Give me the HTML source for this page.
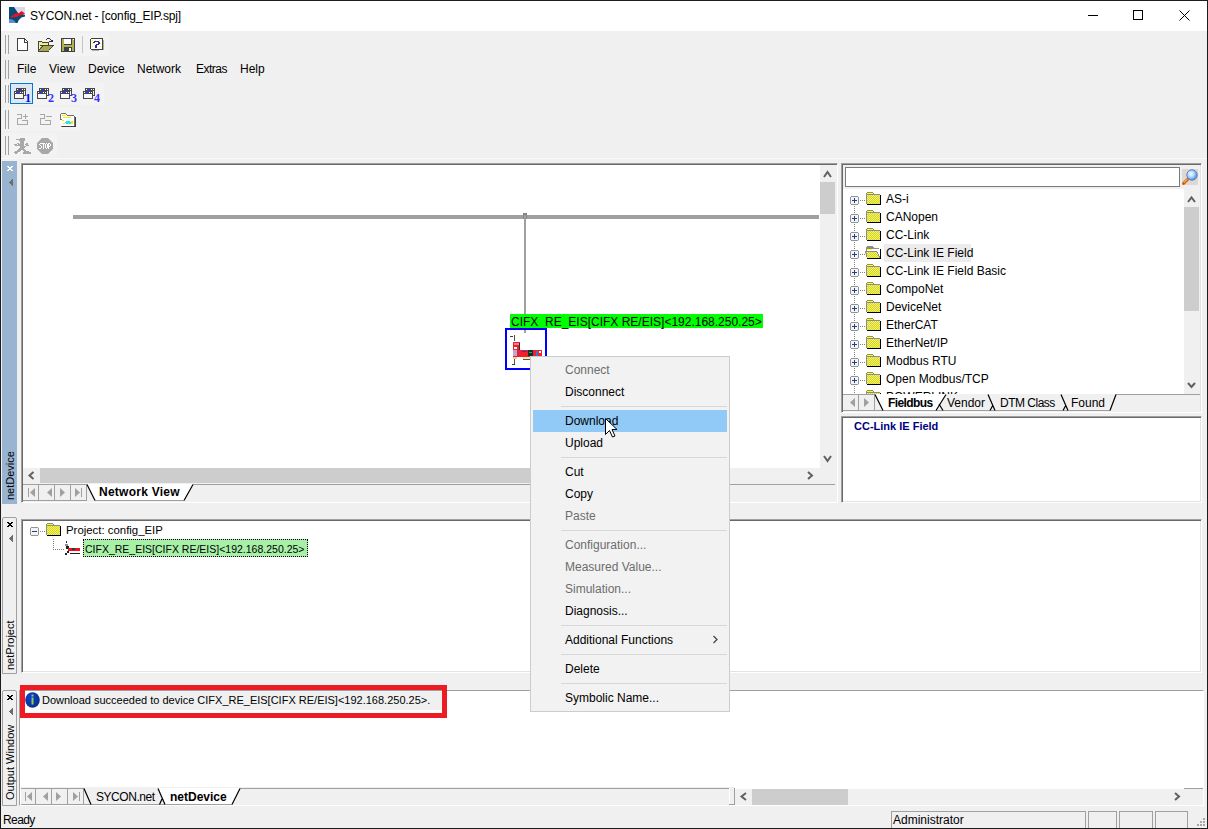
<!DOCTYPE html>
<html><head><meta charset="utf-8">
<style>
*{margin:0;padding:0;box-sizing:border-box}
html,body{width:1208px;height:829px;overflow:hidden;background:#f0f0f0;font-family:"Liberation Sans",sans-serif;font-size:12px;color:#000}
.a{position:absolute}
.t{position:absolute;white-space:nowrap;line-height:16px}
.b{font-weight:bold}
svg{position:absolute;overflow:visible}
.sunk{position:absolute;border:1px solid #a0a0a0;border-right-color:#fff;border-bottom-color:#fff;box-shadow:inset 1px 1px #696969,inset -1px -1px #e3e3e3;background:#fff}
.grip{position:absolute;width:4px;border-left:1px solid #a0a0a0;border-right:1px solid #a0a0a0}
.mi{position:absolute;left:565px;white-space:nowrap;line-height:16px}
.dis{color:#6d6d6d}
.sep{position:absolute;left:561px;width:166px;height:1px;background:#d7d7d7}
.tree{position:absolute;left:886px;white-space:nowrap;line-height:16px}
.pb{position:absolute;width:9px;height:9px;border:1px solid #a0a0a0;background:#f4f4f4;border-radius:1px}
.pb:before{content:"";position:absolute;left:1px;top:3px;width:5px;height:1px;background:#2b4a8c}
.pb:after{content:"";position:absolute;left:3px;top:1px;width:1px;height:5px;background:#2b4a8c}
.dh{position:absolute;height:1px;border-top:1px dotted #808080}
.nb{position:absolute;width:16px;height:16px;border-right:1px solid #d0d0d0;background:#f0f0f0}
.spanel{position:absolute;top:811px;height:17px;border:1px solid #a0a0a0;border-bottom:none}
</style></head><body>
<!-- window frame -->
<div class="a" style="left:0;top:0;width:1208px;height:829px;border:1px solid #1c1c1c"></div>
<div class="a" style="left:1px;top:1px;width:1206px;height:30px;background:#fff"></div>
<div class="t" style="left:30px;top:8px;letter-spacing:-0.15px">SYCON.net - [config_EIP.spj]</div>
<!-- caption buttons -->
<div class="a" style="left:1088px;top:15px;width:10px;height:1px;background:#000"></div>
<div class="a" style="left:1133px;top:10px;width:10px;height:10px;border:1px solid #000"></div>
<svg style="left:1179px;top:10px" width="11" height="11"><path d="M0.5 0.5L10.5 10.5M10.5 0.5L0.5 10.5" stroke="#000" stroke-width="1"/></svg>


<div class="a" style="left:3px;top:33px;width:106px;height:23px;background:#f3f3f3;border-radius:3px"></div>
<div class="a" style="left:3px;top:82px;width:101px;height:23px;background:#f3f3f3;border-radius:3px"></div>
<div class="a" style="left:3px;top:107px;width:77px;height:24px;background:#f3f3f3;border-radius:3px"></div>
<div class="a" style="left:3px;top:133px;width:54px;height:24px;background:#f3f3f3;border-radius:3px"></div>
<!-- toolbar icons -->
<svg style="left:9px;top:7px" width="16" height="16">
 <rect x="5" y="0" width="11" height="9" fill="#d8dce8"/>
 <path d="M0 0H5L9 6L16 8V9.5L12.5 10.5Q10 12 8.5 16H0Z" fill="#0a4a78"/>
 <path d="M0 12Q5 12 7 16H0Z" fill="#5a92c8"/>
 <path d="M1.5 10L4 8L7 6.5L10 6L12.5 4L16 6.5L13 8L10 8.5L8 10L2 10.5Z" fill="#ee1020"/>
</svg>
<svg style="left:17px;top:38px" width="11" height="13" shape-rendering="crispEdges">
 <path d="M1 1h6l3 3v8h-9z" fill="#fff"/>
 <path d="M0 0h8v1h-8zM0 0h1v13h-1zM0 12h11v1h-11zM10 3h1v10h-1zM7 0h1v4h3v1h-4zM8 1h1v1h-1zM9 2h1v1h-1z" fill="#404040"/>
</svg>
<svg style="left:38px;top:37px" width="16" height="15" shape-rendering="crispEdges">
 <path d="M1 4h3l1 1h5v3h-9z" fill="#f0f080"/>
 <path d="M0 4h4v1h-4zM0 4h1v11h-1zM4 5h6v1h-6zM10 5h1v3h-1z" fill="#404040"/>
 <path d="M3 9h12l-4 5h-10z" fill="#a8a850"/>
 <path d="M2 8h14v1h-14zM1 13l4-5h1l-4 5zM10 13l5-5h1l-5 5zM0 14h11v1h-11z" fill="#404040"/>
 <path d="M9 1h3v1h-3zM8 2h1v1h-1zM12 2h1v1h-1zM13 3h1v1h-1zM11 4h4v1h-4zM14 3h1v1h-1z" fill="#303030"/>
</svg>
<svg style="left:61px;top:38px" width="14" height="14" shape-rendering="crispEdges">
 <rect x="0" y="0" width="14" height="14" fill="#404040"/>
 <rect x="1" y="1" width="12" height="12" fill="#b0b050"/>
 <rect x="3" y="1" width="8" height="6" fill="#404040"/>
 <rect x="3" y="1" width="7" height="5" fill="#fff"/>
 <rect x="3" y="9" width="8" height="4" fill="#404040"/>
 <rect x="8" y="10" width="2" height="3" fill="#fff"/>
 <rect x="12" y="1" width="1" height="1" fill="#fff"/>
</svg>
<div class="a" style="left:82px;top:36px;width:1px;height:17px;background:#c4c4c4"></div>
<svg style="left:90px;top:38px" width="15" height="15" shape-rendering="crispEdges">
 <path d="M1 0h11l1 1v10l-1 1h-3l3 3l-3-3h-8l-1-1v-10z" fill="#404040"/>
 <path d="M1 1h11v10h-11z" fill="#fffff0"/>
 <path d="M2 2h1v1h-1zM5 2h1v1h-1zM9 2h1v1h-1zM2 5h1v1h-1zM10 5h1v1h-1zM2 8h1v1h-1zM5 9h1v1h-1zM10 8h1v1h-1z" fill="#f0f000"/>
 <path d="M4 3h5v1h1v2h-1v1h-2v2h-2v-2h1v-1h2v-2h-3v1h-2v-1h1z" fill="#2a2ab0"/>
 <rect x="5" y="9" width="2" height="1" fill="#2a2ab0"/>
 <path d="M13 2h1v10h-1zM2 12h7v1h-7z" fill="#b0b0b0"/>
</svg>

<!-- row3 window icons -->
<div class="a" style="left:10px;top:83px;width:23px;height:21px;border:1px solid #0078d7;background:#dde8f3"></div>
<svg style="left:14px;top:88px" width="80" height="16" shape-rendering="crispEdges">
 <g id="wi">
  <rect x="2" y="0" width="10" height="8" fill="#000"/>
  <rect x="3" y="3" width="8" height="4" fill="#f0f0f0"/>
  <path d="M3 1h1v1h-1zM8 1h1v1h-1zM10 1h1v1h-1z" fill="#fff"/>
  <rect x="5" y="1" width="2" height="2" fill="#0000ff"/>
  <rect x="0" y="3" width="10" height="8" fill="#000"/>
  <rect x="1" y="6" width="8" height="4" fill="#e8f0f8"/>
  <path d="M1 4h1v1h-1zM6 4h1v1h-1zM8 4h1v1h-1z" fill="#fff"/>
  <rect x="3" y="4" width="2" height="2" fill="#0000ff"/>
 </g>
 <g id="wi2">
  <rect x="2" y="0" width="10" height="8" fill="#484848"/>
  <rect x="3" y="3" width="8" height="4" fill="#f4f4f4"/>
  <path d="M3 1h1v1h-1zM8 1h1v1h-1zM10 1h1v1h-1z" fill="#fff"/>
  <rect x="5" y="1" width="2" height="2" fill="#3333ff"/>
  <rect x="0" y="3" width="10" height="8" fill="#484848"/>
  <rect x="1" y="6" width="8" height="4" fill="#fafafa"/>
  <path d="M1 4h1v1h-1zM6 4h1v1h-1zM8 4h1v1h-1z" fill="#fff"/>
  <rect x="3" y="4" width="2" height="2" fill="#3333ff"/>
 </g>
 <use href="#wi2" x="23"/>
 <use href="#wi2" x="46"/>
 <use href="#wi2" x="69"/>
</svg>


<div class="a" style="left:25px;top:92px;font:bold 12px/12px 'Liberation Serif',serif;color:#0000ff">1</div>
<div class="a" style="left:48px;top:92px;font:bold 12px/12px 'Liberation Serif',serif;color:#3333ff">2</div>
<div class="a" style="left:71px;top:92px;font:bold 12px/12px 'Liberation Serif',serif;color:#3333ff">3</div>
<div class="a" style="left:94px;top:92px;font:bold 12px/12px 'Liberation Serif',serif;color:#3333ff">4</div>
<!-- row4 icons -->
<svg style="left:17px;top:114px" width="60" height="13" shape-rendering="crispEdges">
 <path d="M0 0h5v1h-5zM4 0h1v5h-1zM0 4h5v1h-5zM0 4h1v7h-1zM0 10h11v1h-11zM10 6h1v5h-1zM5 6h6v1h-6zM8 0h1v5h-1zM6 2h5v1h-5z" fill="#a8a8a8"/>
 <path d="M23 0h5v1h-5zM27 0h1v5h-1zM23 4h5v1h-5zM23 4h1v7h-1zM23 10h11v1h-11zM33 6h1v5h-1zM28 6h6v1h-6zM29 2h6v1h-6z" fill="#a8a8a8"/>
 <g transform="translate(43,-1)">
  <path d="M1 1h5l1 1h6l1 1v10h-13l-1-6h1z" fill="#fff"/>
  <path d="M1 0h5v1h-5zM0 1h1v6h-1zM6 1h1v1h-1zM7 2h7v1h-7zM14 3h1v10h-1zM1 13h14v1h-14zM0 6h2v1h-2z" fill="#707070"/>
  <path d="M2 2h4v1h-4zM3 4h8v1h-8zM2 7h2v1h-2zM5 9h1v1h-1zM11 8h2v3h-2zM3 10h2v1h-2z" fill="#f0f000"/>
  <path d="M6 8h4v1h1v2h-5v-1h-1v-1h1z" fill="#30e0f0"/>
  <path d="M2 13h14v1h-14zM15 4h1v10h-1z" fill="#404040"/>
 </g>
</svg>

<!-- row5 icons -->
<svg style="left:14px;top:138px" width="40" height="16" shape-rendering="crispEdges">
 <path d="M6 0h5v1h-5zM2 1h9v1h-9zM5 2h6v1h-6zM6 3h4v1h-4zM6 4h4v1h-4zM3 5h2v1h-2zM6 5h4v1h-4zM12 5h2v1h-2zM0 6h3v1h-3zM4 6h6v1h-6zM11 6h3v1h-3zM1 7h9v1h-9zM12 7h3v1h-3zM6 8h6v1h-6zM6 9h5v1h-5zM5 10h5v1h-5zM4 11h4v1h-4zM8 11h3v1h-3zM3 12h4v1h-4zM9 12h3v1h-3zM1 13h5v1h-5zM10 13h5v1h-5zM0 14h4v1h-4zM9 14h8v1h-8zM1 15h2v1h-2zM9 15h8v1h-8z" fill="#a8a8a8"/>
 <path d="M28 0h6l5 5v6l-5 5h-6l-5-5v-6z" fill="#a8a8a8" shape-rendering="auto"/>
 <path d="M26 5h1v1h-1zM27 5h1v1h-1zM25 6h1v1h-1zM26 7h1v1h-1zM27 8h1v1h-1zM27 9h1v1h-1zM25 10h1v1h-1zM26 10h1v1h-1zM28 5h1v1h-1zM29 5h1v1h-1zM30 5h1v1h-1zM29 6h1v1h-1zM29 7h1v1h-1zM29 8h1v1h-1zM29 9h1v1h-1zM29 10h1v1h-1zM32 5h1v1h-1zM31 6h1v1h-1zM33 6h1v1h-1zM31 7h1v1h-1zM33 7h1v1h-1zM31 8h1v1h-1zM33 8h1v1h-1zM31 9h1v1h-1zM33 9h1v1h-1zM32 10h1v1h-1zM34 5h1v1h-1zM35 5h1v1h-1zM34 6h1v1h-1zM36 6h1v1h-1zM34 7h1v1h-1zM36 7h1v1h-1zM34 8h1v1h-1zM35 8h1v1h-1zM34 9h1v1h-1zM34 10h1v1h-1z" fill="#fff"/>
</svg>

<!-- toolbar rows -->
<div class="grip" style="left:5px;top:35px;height:19px"></div>
<div class="grip" style="left:5px;top:60px;height:19px"></div>
<div class="grip" style="left:5px;top:85px;height:18px"></div>
<div class="grip" style="left:5px;top:110px;height:19px"></div>
<div class="grip" style="left:5px;top:136px;height:19px"></div>

<!-- menu -->
<div class="t" style="left:17px;top:61px">File</div>
<div class="t" style="left:49px;top:61px">View</div>
<div class="t" style="left:88px;top:61px">Device</div>
<div class="t" style="left:137px;top:61px">Network</div>
<div class="t" style="left:196px;top:61px;letter-spacing:-0.5px">Extras</div>
<div class="t" style="left:240px;top:61px">Help</div>

<!-- toolbar separator line bottom -->
<div class="a" style="left:1px;top:158px;width:1206px;height:1px;background:#fafafa"></div>

<!-- ===== netDevice panel ===== -->
<div class="a" style="left:2px;top:161px;width:15px;height:343px;background:#99b4d1"></div>
<svg style="left:7px;top:166px" width="6" height="5" shape-rendering="crispEdges"><path d="M0 0h2v1h-2zM4 0h2v1h-2zM1 1h4v1h-4zM2 2h2v1h-2zM1 3h4v1h-4zM0 4h2v1h-2zM4 4h2v1h-2z" fill="#fff"/></svg>
<svg style="left:9px;top:179px" width="4" height="7" shape-rendering="crispEdges"><path d="M3 0h1v7h-1zM2 1h1v5h-1zM1 2h1v3h-1zM0 3h1v1h-1z" fill="#6d6d6d"/></svg>
<div class="t" style="left:4px;top:500px;font-size:11px;line-height:13px;transform:rotate(-90deg);transform-origin:0 0;color:#000">netDevice</div>
<div class="sunk" style="left:21px;top:163px;width:817px;height:340px"></div>
<!-- v scrollbar -->
<div class="a" style="left:820px;top:165px;width:17px;height:303px;background:#f0f0f0"></div>
<div class="a" style="left:820px;top:182px;width:15px;height:32px;background:#cdcdcd"></div>
<!-- h scrollbar -->
<div class="a" style="left:23px;top:468px;width:814px;height:15px;background:#f0f0f0"></div>
<div class="a" style="left:40px;top:468px;width:500px;height:15px;background:#cdcdcd"></div>
<!-- tab row -->
<svg style="left:23px;top:483px" width="814" height="19">
 <rect x="0" y="0" width="814" height="19" fill="#f0f0f0"/>
 <path d="M0 1.5H64M170 1.5H812M0 17.5H64M72 17.5H161M15.5 1V18M31.5 1V18M47.5 1V18M63.5 1V18" stroke="#a0a0a0" stroke-width="1" fill="none"/>
 <path d="M64 1L170 1L161 17L72 17Z" fill="#fff"/>
 <path d="M64 1.5L72 17.5M170 1.5L161 17.5" stroke="#000" stroke-width="1.2" fill="none"/>
 <path d="M5 5h1v9h-1zM12 5v9l-5-4.5z" fill="#a0a0a0"/>
 <path d="M29 5v9l-5-4.5z" fill="#a0a0a0"/>
 <path d="M37 5v9l5-4.5z" fill="#a0a0a0"/>
 <path d="M52 5v9l5-4.5zM58 5h1v9h-1z" fill="#a0a0a0"/>
</svg>
<div class="t b" style="left:99px;top:484px;font-size:12px;letter-spacing:0.25px">Network View</div>

<!-- bus -->
<div class="a" style="left:73px;top:215px;width:746px;height:4px;background:#a0a0a0"></div>
<div class="a" style="left:523px;top:213px;width:4px;height:6px;background:#858585"></div>
<div class="a" style="left:524px;top:215px;width:2px;height:100px;background:#a0a0a0"></div>
<div class="a" style="left:510px;top:314px;width:253px;height:14px;background:#00ff00"></div>
<div class="t" style="left:511px;top:314px">CIFX_RE_EIS[CIFX RE/EIS]&lt;192.168.250.25&gt;</div>
<div class="a" style="left:505px;top:328px;width:42px;height:42px;border:2px solid #0000ff"></div>
<svg style="left:506px;top:330px" width="40" height="38" shape-rendering="crispEdges">
 <rect x="18" y="0" width="2" height="3" fill="#a0a0a0"/>
 <rect x="8" y="5" width="1" height="6" fill="#505050"/>
 <rect x="4" y="6" width="3" height="1" fill="#404040"/>
 <rect x="7" y="12" width="7" height="15" fill="#ee2030"/>
 <rect x="8" y="13" width="5" height="2" fill="#f08090"/>
 <rect x="8" y="17" width="3" height="2" fill="#fff"/>
 <rect x="7" y="20" width="4" height="6" fill="#d0a0d0"/>
 <rect x="9" y="21" width="2" height="4" fill="#80c0f0"/>
 <rect x="13" y="13" width="1" height="14" fill="#303030"/>
 <rect x="13" y="20" width="23" height="7" fill="#f02030"/>
 <rect x="16" y="21" width="5" height="1" fill="#3040a0"/>
 <rect x="22" y="20" width="5" height="6" fill="#103028"/>
 <rect x="23" y="22" width="3" height="1" fill="#20a080"/>
 <rect x="30" y="21" width="2" height="5" fill="#3080c0"/>
 <rect x="33" y="21" width="2" height="2" fill="#fff"/>
 <rect x="7" y="27" width="4" height="2" fill="#f0d090"/>
 <rect x="17" y="27" width="7" height="2" fill="#f0f0a0"/>
 <rect x="17" y="29" width="7" height="1" fill="#505050"/>
 <rect x="8" y="29" width="1" height="6" fill="#505050"/>
 <rect x="6" y="34" width="3" height="1" fill="#404040"/>
</svg>

<!-- ===== right catalog panel ===== -->
<div class="sunk" style="left:841px;top:163px;width:361px;height:250px;background:#f0f0f0"></div>
<div class="a" style="left:845px;top:167px;width:335px;height:20px;border:1px solid #7a7a7a;background:#fff"></div>
<div class="a" style="left:1182px;top:169px;width:16px;height:16px;background:#dcd9d3"></div>
<svg style="left:1182px;top:169px" width="16" height="16">
 <defs><radialGradient id="lens" cx="0.4" cy="0.4" r="0.6"><stop offset="0" stop-color="#ffffff"/><stop offset="0.5" stop-color="#a8dcff"/><stop offset="1" stop-color="#4a90e0"/></radialGradient></defs>
 <path d="M1.5 14.5L6 10" stroke="#d06010" stroke-width="3" stroke-linecap="round"/>
 <path d="M2 13.5L5.5 10" stroke="#f8a040" stroke-width="1.2"/>
 <circle cx="10" cy="6" r="5.2" fill="url(#lens)" stroke="#6a7ad0" stroke-width="1"/>
</svg>
<div class="a" style="left:843px;top:189px;width:357px;height:205px;background:#fff"></div>
<div class="a" style="left:1184px;top:189px;width:16px;height:205px;background:#f0f0f0"></div>
<div class="a" style="left:1184px;top:207px;width:15px;height:104px;background:#cdcdcd"></div>



<svg style="left:0;top:0" width="1208" height="829" shape-rendering="crispEdges">
 <defs>
  <pattern id="dith" width="2" height="2" patternUnits="userSpaceOnUse">
   <rect width="2" height="2" fill="#c8c890"/>
   <rect width="1" height="1" fill="#ffff00"/>
   <rect x="1" y="1" width="1" height="1" fill="#ffff00"/>
  </pattern>
  <g id="pbx">
   <rect x="0" y="0" width="9" height="9" rx="1" fill="#f4f4f4" stroke="none"/>
   <path d="M1 0h7v1h-7zM1 8h7v1h-7zM0 1h1v7h-1zM8 1h1v7h-1z" fill="#939393"/>
   <path d="M2 4h5v1h-5zM4 2h1v5h-1z" fill="#1f3f8f"/>
   <path d="M10 4h1v1h-1zM12 4h1v1h-1zM14 4h1v1h-1z" fill="#808080"/>
  </g>
  <g id="fld">
   <path d="M1 0h6v1h1v1h6v1h-14v-2h1z" fill="#8c8c8c"/>
   <path d="M1 1h6v1h-6z" fill="#ffff00"/>
   <rect x="0" y="2" width="1" height="10" fill="#8c8c8c"/>
   <rect x="1" y="3" width="13" height="9" fill="url(#dith)"/>
   <rect x="1" y="12" width="14" height="1" fill="#000"/>
   <rect x="14" y="3" width="1" height="10" fill="#000"/>
  </g>
  <g id="fldo">
   <path d="M2 0h6v1h1v1h5v1h-13v-2h1z" fill="#8c8c8c"/>
   <rect x="1" y="2" width="1" height="4" fill="#8c8c8c"/>
   <path d="M2 3h5v1h-5z" fill="#ffff00"/>
   <path d="M0 6h12l3 6h-13z" fill="url(#dith)"/>
   <path d="M0 5h12v1h-12zM0 6h1v1h-1zM1 7h1v4h-1zM12 6h1v2h-1zM13 8h1v2h-1zM14 10h1v2h-1z" fill="#8c8c8c"/>
   <rect x="2" y="12" width="14" height="1" fill="#000"/>
   <rect x="15" y="3" width="1" height="10" fill="#000"/>
  </g>
 </defs>
 <rect x="854" y="206" width="1" height="1" fill="#808080"/><rect x="854" y="208" width="1" height="1" fill="#808080"/><rect x="854" y="210" width="1" height="1" fill="#808080"/><rect x="854" y="212" width="1" height="1" fill="#808080"/><rect x="854" y="224" width="1" height="1" fill="#808080"/><rect x="854" y="226" width="1" height="1" fill="#808080"/><rect x="854" y="228" width="1" height="1" fill="#808080"/><rect x="854" y="230" width="1" height="1" fill="#808080"/><rect x="854" y="242" width="1" height="1" fill="#808080"/><rect x="854" y="244" width="1" height="1" fill="#808080"/><rect x="854" y="246" width="1" height="1" fill="#808080"/><rect x="854" y="248" width="1" height="1" fill="#808080"/><rect x="854" y="260" width="1" height="1" fill="#808080"/><rect x="854" y="262" width="1" height="1" fill="#808080"/><rect x="854" y="264" width="1" height="1" fill="#808080"/><rect x="854" y="266" width="1" height="1" fill="#808080"/><rect x="854" y="278" width="1" height="1" fill="#808080"/><rect x="854" y="280" width="1" height="1" fill="#808080"/><rect x="854" y="282" width="1" height="1" fill="#808080"/><rect x="854" y="284" width="1" height="1" fill="#808080"/><rect x="854" y="296" width="1" height="1" fill="#808080"/><rect x="854" y="298" width="1" height="1" fill="#808080"/><rect x="854" y="300" width="1" height="1" fill="#808080"/><rect x="854" y="302" width="1" height="1" fill="#808080"/><rect x="854" y="314" width="1" height="1" fill="#808080"/><rect x="854" y="316" width="1" height="1" fill="#808080"/><rect x="854" y="318" width="1" height="1" fill="#808080"/><rect x="854" y="320" width="1" height="1" fill="#808080"/><rect x="854" y="332" width="1" height="1" fill="#808080"/><rect x="854" y="334" width="1" height="1" fill="#808080"/><rect x="854" y="336" width="1" height="1" fill="#808080"/><rect x="854" y="338" width="1" height="1" fill="#808080"/><rect x="854" y="350" width="1" height="1" fill="#808080"/><rect x="854" y="352" width="1" height="1" fill="#808080"/><rect x="854" y="354" width="1" height="1" fill="#808080"/><rect x="854" y="356" width="1" height="1" fill="#808080"/><rect x="854" y="368" width="1" height="1" fill="#808080"/><rect x="854" y="370" width="1" height="1" fill="#808080"/><rect x="854" y="372" width="1" height="1" fill="#808080"/><rect x="854" y="374" width="1" height="1" fill="#808080"/><rect x="854" y="386" width="1" height="1" fill="#808080"/><rect x="854" y="388" width="1" height="1" fill="#808080"/><rect x="854" y="390" width="1" height="1" fill="#808080"/><rect x="854" y="392" width="1" height="1" fill="#808080"/>
 <use href="#pbx" x="850" y="196"/>
 <use href="#fld" x="866" y="192"/>
 <use href="#pbx" x="850" y="214"/>
 <use href="#fld" x="866" y="210"/>
 <use href="#pbx" x="850" y="232"/>
 <use href="#fld" x="866" y="228"/>
 <use href="#pbx" x="850" y="250"/>
 <use href="#fldo" x="865" y="246"/>
 <use href="#pbx" x="850" y="268"/>
 <use href="#fld" x="866" y="264"/>
 <use href="#pbx" x="850" y="286"/>
 <use href="#fld" x="866" y="282"/>
 <use href="#pbx" x="850" y="304"/>
 <use href="#fld" x="866" y="300"/>
 <use href="#pbx" x="850" y="322"/>
 <use href="#fld" x="866" y="318"/>
 <use href="#pbx" x="850" y="340"/>
 <use href="#fld" x="866" y="336"/>
 <use href="#pbx" x="850" y="358"/>
 <use href="#fld" x="866" y="354"/>
 <use href="#pbx" x="850" y="376"/>
 <use href="#fld" x="866" y="372"/>
 <use href="#pbx" x="850" y="394"/>
 <use href="#fld" x="866" y="390"/>
</svg>
<div class="tree" style="top:191px">AS-i</div>
<div class="tree" style="top:209px">CANopen</div>
<div class="tree" style="top:227px">CC-Link</div>
<div class="a" style="left:884px;top:244px;width:87px;height:18px;background:#ececec"></div>
<div class="tree" style="top:245px">CC-Link IE Field</div>
<div class="tree" style="top:263px">CC-Link IE Field Basic</div>
<div class="tree" style="top:281px">CompoNet</div>
<div class="tree" style="top:299px">DeviceNet</div>
<div class="tree" style="top:317px">EtherCAT</div>
<div class="tree" style="top:335px">EtherNet/IP</div>
<div class="tree" style="top:353px">Modbus RTU</div>
<div class="tree" style="top:371px">Open Modbus/TCP</div>
<div class="tree" style="top:389px">POWERLINK</div>
<svg style="left:843px;top:393px" width="357" height="19">
 <rect x="0" y="1" width="357" height="18" fill="#f0f0f0"/>
 <path d="M0 1.5H32M273 1.5H357M0 17.5H267M15.5 1V18M31.5 1V18" stroke="#a0a0a0" stroke-width="1" fill="none"/>
 <path d="M32 1L103 1L93 17L40 17Z" fill="#fff"/>
 <path d="M32 1.5L40 17.5M103 1.5L93 17.5M96 11L100 17.5M145 1.5L152 17.5M147 17.5L150 12M218 1.5L225 17.5M220 17.5L223 12M273 1.5L267 17.5" stroke="#000" stroke-width="1.2" fill="none"/>
 <path d="M12 5v9l-5-4.5z" fill="#a0a0a0"/>
 <path d="M21 5v9l5-4.5z" fill="#a0a0a0"/>
</svg>

<div class="t b" style="left:888px;top:395px;letter-spacing:-0.6px">Fieldbus</div>
<div class="t" style="left:947px;top:395px">Vendor</div>
<div class="t" style="left:1000px;top:395px;letter-spacing:-0.5px">DTM Class</div>
<div class="t" style="left:1071px;top:395px">Found</div>

<div class="sunk" style="left:841px;top:416px;width:361px;height:87px"></div>
<div class="t b" style="left:854px;top:418px;font-size:11px;color:#000080">CC-Link IE Field</div>

<!-- ===== netProject ===== -->
<div class="a" style="left:2px;top:517px;width:15px;height:157px;border:1px solid #a0a0a0;border-radius:2px 2px 0 0;background:#f0f0f0"></div>
<svg style="left:7px;top:522px" width="6" height="5" shape-rendering="crispEdges"><path d="M0 0h2v1h-2zM4 0h2v1h-2zM1 1h4v1h-4zM2 2h2v1h-2zM1 3h4v1h-4zM0 4h2v1h-2zM4 4h2v1h-2z" fill="#000"/></svg>
<svg style="left:9px;top:535px" width="4" height="7" shape-rendering="crispEdges"><path d="M3 0h1v7h-1zM2 1h1v5h-1zM1 2h1v3h-1zM0 3h1v1h-1z" fill="#6d6d6d"/></svg>
<div class="t" style="left:4px;top:670px;font-size:11px;line-height:13px;transform:rotate(-90deg);transform-origin:0 0">netProject</div>
<div class="sunk" style="left:21px;top:519px;width:1181px;height:154px"></div>
<svg style="left:0;top:0" width="1" height="1" shape-rendering="crispEdges">
 <rect x="30" y="527" width="9" height="9" fill="#f4f4f4"/>
 <path d="M31 527h7v1h-7zM31 535h7v1h-7zM30 528h1v7h-1zM38 528h1v7h-1z" fill="#939393"/>
 <rect x="32" y="531" width="5" height="1" fill="#1f3f8f"/>
 <path d="M40 531h1v1h-1zM42 531h1v1h-1zM44 531h1v1h-1z" fill="#808080"/>
 <use href="#fld" x="46" y="523"/>
 <path d="M53 539h1v1h-1zM53 541h1v1h-1zM53 543h1v1h-1zM53 545h1v1h-1zM53 547h1v1h-1zM53 549h1v1h-1zM55 549h1v1h-1zM57 549h1v1h-1zM59 549h1v1h-1zM61 549h1v1h-1zM63 549h1v1h-1z" fill="#808080"/>
 <rect x="66" y="541" width="1" height="2" fill="#303030"/>
 <rect x="65" y="544" width="3" height="2" fill="#909090"/>
 <rect x="66" y="546" width="3" height="3" fill="#202020"/>
 <rect x="68" y="548" width="12" height="3" fill="#ee1020"/>
 <rect x="72" y="548" width="3" height="2" fill="#204040"/>
 <rect x="67" y="551" width="2" height="2" fill="#202020"/>
 <rect x="65" y="553" width="2" height="2" fill="#202020"/>
 <rect x="70" y="553" width="10" height="1" fill="#202020"/>
</svg>
<div class="t" style="left:66px;top:522px;font-size:11.4px">Project: config_EIP</div>
<div class="a" style="left:83px;top:539px;width:225px;height:18px;background:#a8f0a8;border:1px dotted #000"></div>
<div class="t" style="left:85px;top:541px;font-size:10.5px">CIFX_RE_EIS[CIFX RE/EIS]&lt;192.168.250.25&gt;</div>

<!-- ===== Output ===== -->
<div class="a" style="left:2px;top:690px;width:15px;height:116px;border:1px solid #a0a0a0;border-radius:2px 2px 0 0;background:#f0f0f0"></div>
<svg style="left:7px;top:695px" width="6" height="5" shape-rendering="crispEdges"><path d="M0 0h2v1h-2zM4 0h2v1h-2zM1 1h4v1h-4zM2 2h2v1h-2zM1 3h4v1h-4zM0 4h2v1h-2zM4 4h2v1h-2z" fill="#000"/></svg>
<svg style="left:9px;top:708px" width="4" height="7" shape-rendering="crispEdges"><path d="M3 0h1v7h-1zM2 1h1v5h-1zM1 2h1v3h-1zM0 3h1v1h-1z" fill="#6d6d6d"/></svg>
<div class="t" style="left:4px;top:800px;font-size:11px;line-height:13px;transform:rotate(-90deg);transform-origin:0 0">Output Window</div>
<div class="a" style="left:19px;top:690px;width:1185px;height:116px;background:#fff;border:1px solid #a0a0a0;border-right-color:#fff;border-bottom-color:#fff"></div>
<div class="a" style="left:40px;top:691px;width:402px;height:19px;background:#f0f0f0"></div>
<svg style="left:25px;top:692px" width="15" height="16">
 <defs><radialGradient id="ig" cx="0.35" cy="0.3" r="0.8"><stop offset="0" stop-color="#0a40d0"/><stop offset="1" stop-color="#08308a"/></radialGradient></defs>
 <ellipse cx="7.5" cy="8" rx="7.3" ry="7.8" fill="url(#ig)"/>
 <rect x="6.5" y="2.5" width="2" height="2" fill="#90d050"/>
 <rect x="6.5" y="5.5" width="2" height="7" fill="#90d050"/>
</svg>
<div class="t" style="left:42px;top:692px;font-size:11px">Download succeeded to device CIFX_RE_EIS[CIFX RE/EIS]&lt;192.168.250.25&gt;.</div>
<div class="a" style="left:20px;top:685px;width:427px;height:33px;border:5px solid #ed1c24"></div>
<!-- output tab row -->
<svg style="left:21px;top:787px" width="714" height="19">
 <rect x="0" y="0" width="714" height="18" fill="#f0f0f0"/>
 <path d="M713.5 1V17.5M708 17.5H714" stroke="#a0a0a0" stroke-width="1" fill="none"/>
 <path d="M708.5 1V17" stroke="#fff" stroke-width="1"/>
 <path d="M0 1.5H63M219 1.5H708M0 17.5H211M14.5 1V18M30.5 1V18M46.5 1V18M62.5 1V18" stroke="#a0a0a0" stroke-width="1" fill="none"/>
 <path d="M137 1L219 1L211 17L144 17Z" fill="#fff"/>
 <path d="M63 1.5L70 17.5M137 1.5L144 17.5M138.5 17.5L141 12M219 1.5L211 17.5" stroke="#000" stroke-width="1.2" fill="none"/>
 <path d="M4 5h1v9h-1zM11 5v9l-5-4.5z" fill="#a0a0a0"/>
 <path d="M27 5v9l-5-4.5z" fill="#a0a0a0"/>
 <path d="M35 5v9l5-4.5z" fill="#a0a0a0"/>
 <path d="M52 5v9l5-4.5zM58 5h1v9h-1z" fill="#a0a0a0"/>
</svg>
<div class="t" style="left:96px;top:789px;letter-spacing:-0.45px">SYCON.net</div>
<div class="t b" style="left:170px;top:789px">netDevice</div>
<div class="a" style="left:735px;top:789px;width:468px;height:16px;background:#f0f0f0"></div>
<div class="a" style="left:752px;top:789px;width:96px;height:16px;background:#cdcdcd"></div>
<div class="a" style="left:1184px;top:788px;width:19px;height:1px;background:#a0a0a0"></div>


<!-- chevrons -->
<svg style="left:0;top:0" width="1208" height="829" fill="none" stroke="#606060" stroke-width="2">
 <path d="M824 177L827.5 172L831 177"/>
 <path d="M824 456L827.5 461L831 456"/>
 <path d="M33.5 472L29.5 475.5L33.5 479"/>
 <path d="M808 472L812 475.5L808 479"/>
 <path d="M1188 202L1191.5 197.5L1195 202"/>
 <path d="M1188 383L1191.5 387L1195 383"/>
 <path d="M746 793L741.5 796.5L746 800"/>
 <path d="M1175 793L1179 796.5L1175 800"/>
</svg>

<!-- ===== context menu ===== -->
<div class="a" style="left:530px;top:356px;width:200px;height:356px;background:#f2f2f2;border:1px solid #cccccc"></div>
<div class="a" style="left:533px;top:410px;width:194px;height:22px;background:#91c9f7"></div>
<div class="mi dis" style="top:362px">Connect</div>
<div class="mi" style="top:384px">Disconnect</div>
<div class="sep" style="top:406px"></div>
<div class="mi" style="top:413px">Download</div>
<div class="mi" style="top:435px">Upload</div>
<div class="sep" style="top:457px"></div>
<div class="mi" style="top:464px">Cut</div>
<div class="mi" style="top:486px">Copy</div>
<div class="mi dis" style="top:508px">Paste</div>
<div class="sep" style="top:530px"></div>
<div class="mi dis" style="top:537px">Configuration...</div>
<div class="mi dis" style="top:559px">Measured Value...</div>
<div class="mi dis" style="top:581px">Simulation...</div>
<div class="mi" style="top:603px">Diagnosis...</div>
<div class="sep" style="top:625px"></div>
<div class="mi" style="top:632px">Additional Functions</div>
<svg style="left:0;top:0" width="1" height="1"><path d="M713.5 636L717 639.5L713.5 643" stroke="#404040" stroke-width="1.2" fill="none"/></svg>
<div class="sep" style="top:654px"></div>
<div class="mi" style="top:661px">Delete</div>
<div class="sep" style="top:683px"></div>
<div class="mi" style="top:690px">Symbolic Name...</div>


<svg style="left:605px;top:418px" width="14" height="22">
 <path d="M0.5 0.5V16.5L4.5 12.5L7.5 19L10 18L7 11.5H12Z" fill="#fff" stroke="#000" stroke-width="1" stroke-linejoin="miter"/>
</svg>

<!-- ===== status bar ===== -->
<div class="t" style="left:3px;top:812px;letter-spacing:-0.6px">Ready</div>
<div class="spanel" style="left:891px;width:195px"></div>
<div class="t" style="left:893px;top:812px">Administrator</div>
<div class="spanel" style="left:1088px;width:29px"></div>
<div class="spanel" style="left:1119px;width:34px"></div>
<div class="spanel" style="left:1155px;width:33px"></div>
<svg style="left:1197px;top:818px" width="8" height="8" shape-rendering="crispEdges"><path d="M6 0h2v2h-2zM3 3h2v2h-2zM6 3h2v2h-2zM0 6h2v2h-2zM3 6h2v2h-2zM6 6h2v2h-2z" fill="#a8a8a8"/></svg>
</body></html>
